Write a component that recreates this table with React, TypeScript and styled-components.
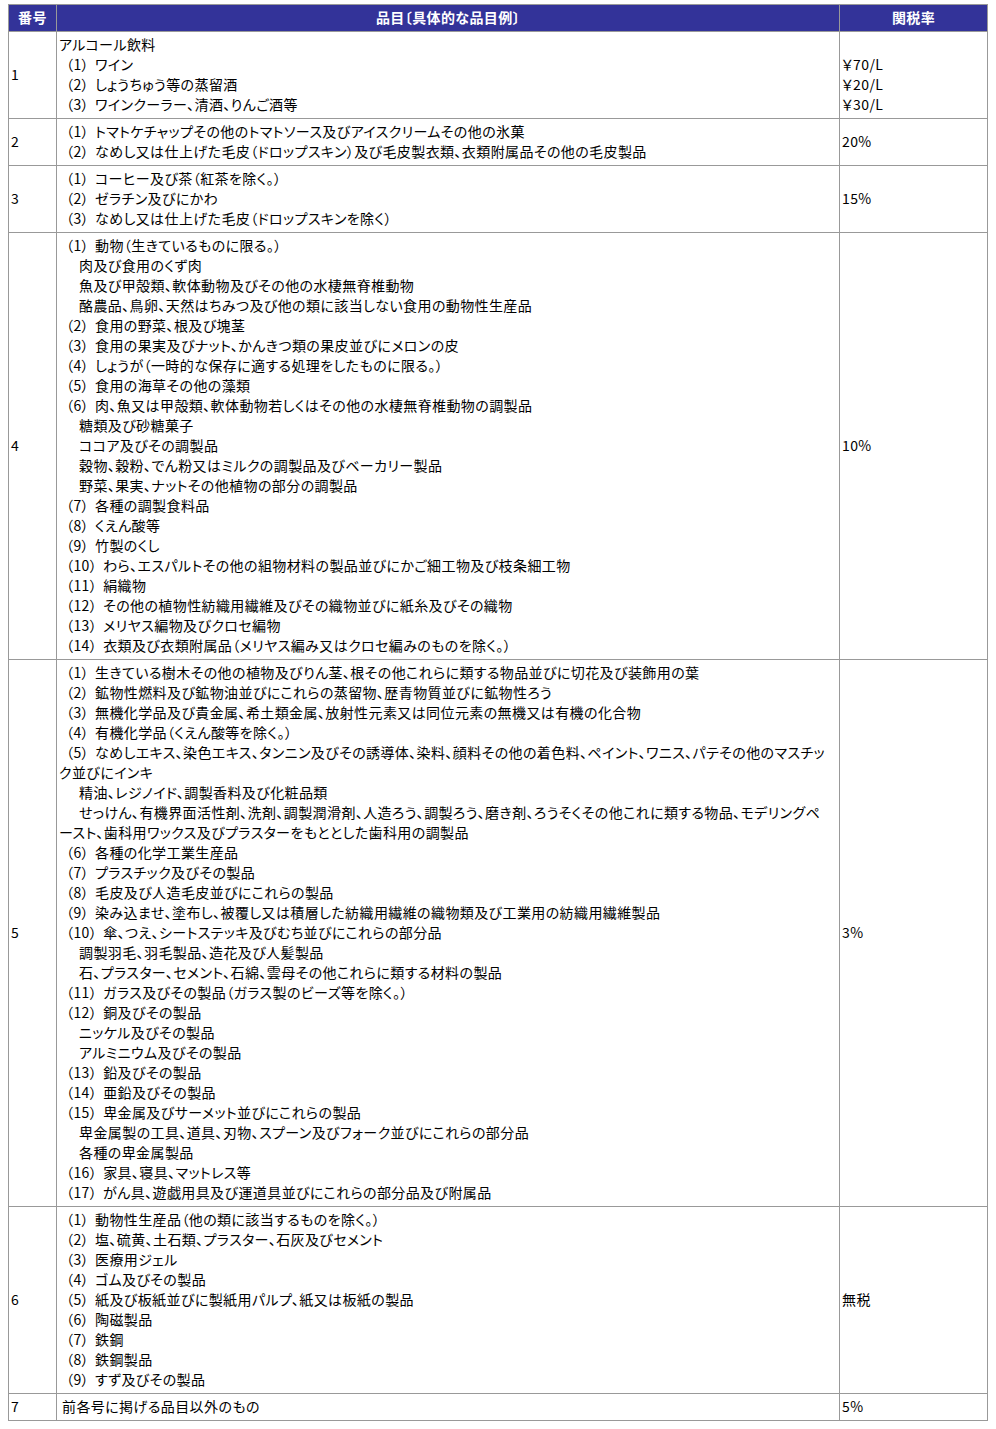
import React from "react";
import styled, {createGlobalStyle} from "styled-components";

const GlobalStyle = createGlobalStyle`
  body {
    margin: 4px 8px;
    background: #ffffff;
    font-family: "Noto Sans CJK JP", "Noto Sans", sans-serif;
    font-size: 14px;
    font-feature-settings: "palt";
    letter-spacing: 0.4px;
    color: #000000;
  }
`

const Table = styled.table`
  width: 980px;
  border-collapse: collapse;
  border: 1px solid #999999;
  table-layout: fixed;
`

const HeadCell = styled.th<{ $width?: number }>`
  ${props => props.$width ? `width: ${props.$width}px;` : ''}
  background: #333399;
  color: #ffffff;
  font-weight: bold;
  text-align: center;
  line-height: 20px;
  padding: 2px 2px 4px;
  border: 1px solid #999999;
`

const Cell = styled.td`
  vertical-align: middle;
  line-height: 20px;
  padding: 2px 2px 4px;
  border: 1px solid #999999;
  text-align: left;
`

const Line = styled.div<{ $indent: number }>`
  padding-left: ${props => props.$indent}px;
  height: 20px;
  white-space: nowrap;
`

const Num = styled.span`
  margin-right: 6px;
`

type Item = [number, string]

type Row = {
  no: string
  items: Item[]
  rates: string[]
}

// 0 = flush, 1 = numbered item, 2 = sub item, 3 = plain item
const rows: Row[] = [
  {
    no: "1",
    items: [
      [0, "アルコール飲料"],
      [1, "（1）ワイン"],
      [1, "（2）しょうちゅう等の蒸留酒"],
      [1, "（3）ワインクーラー、清酒、りんご酒等"],
    ],
    rates: ["\u00a0", "￥70/L", "￥20/L", "￥30/L"],
  },
  {
    no: "2",
    items: [
      [1, "（1）トマトケチャップその他のトマトソース及びアイスクリームその他の氷菓"],
      [1, "（2）なめし又は仕上げた毛皮（ドロップスキン）及び毛皮製衣類、衣類附属品その他の毛皮製品"],
    ],
    rates: ["20%"],
  },
  {
    no: "3",
    items: [
      [1, "（1）コーヒー及び茶（紅茶を除く。）"],
      [1, "（2）ゼラチン及びにかわ"],
      [1, "（3）なめし又は仕上げた毛皮（ドロップスキンを除く）"],
    ],
    rates: ["15%"],
  },
  {
    no: "4",
    items: [
      [1, "（1）動物（生きているものに限る。）"],
      [2, "肉及び食用のくず肉"],
      [2, "魚及び甲殻類、軟体動物及びその他の水棲無脊椎動物"],
      [2, "酪農品、鳥卵、天然はちみつ及び他の類に該当しない食用の動物性生産品"],
      [1, "（2）食用の野菜、根及び塊茎"],
      [1, "（3）食用の果実及びナット、かんきつ類の果皮並びにメロンの皮"],
      [1, "（4）しょうが（一時的な保存に適する処理をしたものに限る。）"],
      [1, "（5）食用の海草その他の藻類"],
      [1, "（6）肉、魚又は甲殻類、軟体動物若しくはその他の水棲無脊椎動物の調製品"],
      [2, "糖類及び砂糖菓子"],
      [2, "ココア及びその調製品"],
      [2, "穀物、穀粉、でん粉又はミルクの調製品及びベーカリー製品"],
      [2, "野菜、果実、ナットその他植物の部分の調製品"],
      [1, "（7）各種の調製食料品"],
      [1, "（8）くえん酸等"],
      [1, "（9）竹製のくし"],
      [1, "（10）わら、エスパルトその他の組物材料の製品並びにかご細工物及び枝条細工物"],
      [1, "（11）絹織物"],
      [1, "（12）その他の植物性紡織用繊維及びその織物並びに紙糸及びその織物"],
      [1, "（13）メリヤス編物及びクロセ編物"],
      [1, "（14）衣類及び衣類附属品（メリヤス編み又はクロセ編みのものを除く。）"],
    ],
    rates: ["10%"],
  },
  {
    no: "5",
    items: [
      [1, "（1）生きている樹木その他の植物及びりん茎、根その他これらに類する物品並びに切花及び装飾用の葉"],
      [1, "（2）鉱物性燃料及び鉱物油並びにこれらの蒸留物、歴青物質並びに鉱物性ろう"],
      [1, "（3）無機化学品及び貴金属、希土類金属、放射性元素又は同位元素の無機又は有機の化合物"],
      [1, "（4）有機化学品（くえん酸等を除く。）"],
      [1, "（5）なめしエキス、染色エキス、タンニン及びその誘導体、染料、顔料その他の着色料、ペイント、ワニス、パテその他のマスチッ"],
      [0, "ク並びにインキ"],
      [2, "精油、レジノイド、調製香料及び化粧品類"],
      [2, "せっけん、有機界面活性剤、洗剤、調製潤滑剤、人造ろう、調製ろう、磨き剤、ろうそくその他これに類する物品、モデリングペ"],
      [0, "ースト、歯科用ワックス及びプラスターをもととした歯科用の調製品"],
      [1, "（6）各種の化学工業生産品"],
      [1, "（7）プラスチック及びその製品"],
      [1, "（8）毛皮及び人造毛皮並びにこれらの製品"],
      [1, "（9）染み込ませ、塗布し、被覆し又は積層した紡織用繊維の織物類及び工業用の紡織用繊維製品"],
      [1, "（10）傘、つえ、シートステッキ及びむち並びにこれらの部分品"],
      [2, "調製羽毛、羽毛製品、造花及び人髪製品"],
      [2, "石、プラスター、セメント、石綿、雲母その他これらに類する材料の製品"],
      [1, "（11）ガラス及びその製品（ガラス製のビーズ等を除く。）"],
      [1, "（12）銅及びその製品"],
      [2, "ニッケル及びその製品"],
      [2, "アルミニウム及びその製品"],
      [1, "（13）鉛及びその製品"],
      [1, "（14）亜鉛及びその製品"],
      [1, "（15）卑金属及びサーメット並びにこれらの製品"],
      [2, "卑金属製の工具、道具、刃物、スプーン及びフォーク並びにこれらの部分品"],
      [2, "各種の卑金属製品"],
      [1, "（16）家具、寝具、マットレス等"],
      [1, "（17）がん具、遊戯用具及び運道具並びにこれらの部分品及び附属品"],
    ],
    rates: ["3%"],
  },
  {
    no: "6",
    items: [
      [1, "（1）動物性生産品（他の類に該当するものを除く。）"],
      [1, "（2）塩、硫黄、土石類、プラスター、石灰及びセメント"],
      [1, "（3）医療用ジェル"],
      [1, "（4）ゴム及びその製品"],
      [1, "（5）紙及び板紙並びに製紙用パルプ、紙又は板紙の製品"],
      [1, "（6）陶磁製品"],
      [1, "（7）鉄鋼"],
      [1, "（8）鉄鋼製品"],
      [1, "（9）すず及びその製品"],
    ],
    rates: ["無税"],
  },
  {
    no: "7",
    items: [
      [3, "前各号に掲げる品目以外のもの"],
    ],
    rates: ["5%"],
  },
]

const indents = [0, 7, 20, 3]

const ItemText: React.FC<{ text: string }> = ({text}) => {
  const match = text.match(/^(（\d+）)(.*)$/)
  if (!match) return <>{text}</>
  return <><Num>{match[1]}</Num>{match[2]}</>
}

export default function App() {
  return <>
    <GlobalStyle/>
    <Table>
      <thead>
        <tr>
          <HeadCell $width={43}>番号</HeadCell>
          <HeadCell $width={778}>品目〔具体的な品目例〕</HeadCell>
          <HeadCell>関税率</HeadCell>
        </tr>
      </thead>
      <tbody>
        {rows.map(row =>
          <tr key={row.no}>
            <Cell>{row.no}</Cell>
            <Cell>
              {row.items.map(([level, text], i) =>
                <Line $indent={indents[level]} key={i}><ItemText text={text}/></Line>)}
            </Cell>
            <Cell>
              {row.rates.map((rate, i) => <Line $indent={0} key={i}>{rate}</Line>)}
            </Cell>
          </tr>
        )}
      </tbody>
    </Table>
  </>
}
